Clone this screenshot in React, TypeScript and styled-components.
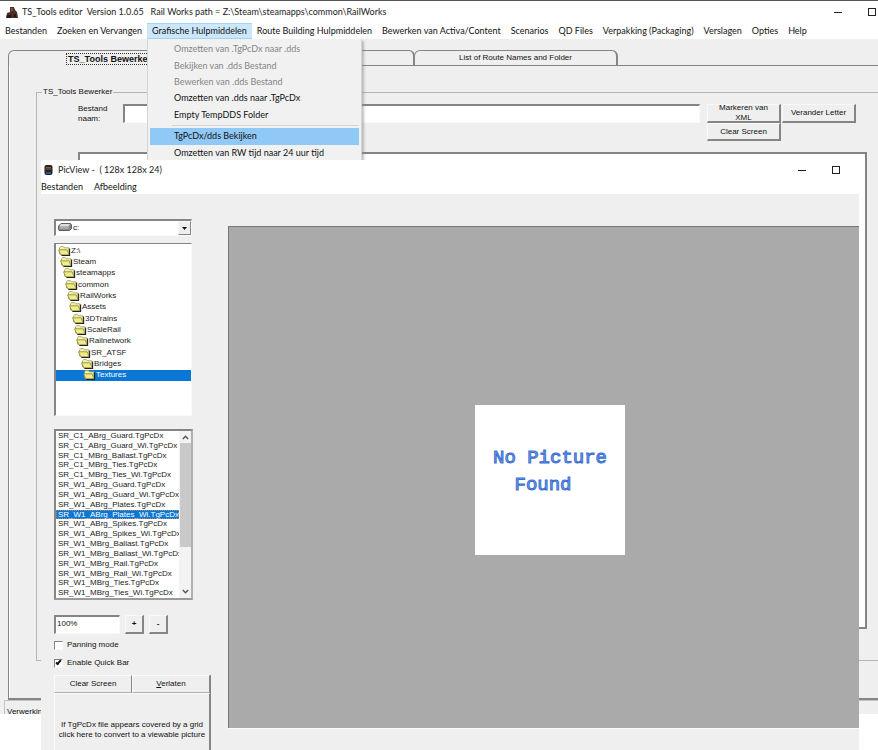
import React from "react";
import styled, { createGlobalStyle, css } from "styled-components";

const FACE = "#efefef";
const SHADOW = "#858585";
const SEGOE = `Lato, "Open Sans", sans-serif`;
const MS_SANS = `"Liberation Sans", Arial, sans-serif`;

const GlobalStyle = createGlobalStyle`
  *, *::before, *::after { box-sizing: border-box; }
  html, body, #root { height: 100%; }
  body { margin: 0; background: #fff; color: #111; overflow: hidden; font: 8px/10px ${MS_SANS}; }
  button, input, select { font: inherit; color: inherit; margin: 0; border-radius: 0; }
`;

const raised = css`
  background: ${FACE};
  border: solid;
  border-width: 1px 2px 2px 1px;
  border-color: #f8f8f8 ${SHADOW} ${SHADOW} #f8f8f8;
`;
const sunken = css`
  background: #fff;
  border: solid;
  border-width: 2px 1px 1px 2px;
  border-color: ${SHADOW} #fafafa #fafafa ${SHADOW};
`;

/* Windows */
const Desktop = styled.div`
  position: relative;
  height: 100%;
  overflow: hidden;
`;
const MainWindow = styled.main`
  display: flex;
  flex-direction: column;
  height: calc(100% - 36px);
  background: ${FACE};
  border-top: 1px solid #555;
  overflow: hidden;
`;
const PicWindow = styled.section`
  position: absolute;
  inset: 160px 19px 0 41px;
  z-index: 3;
  display: flex;
  flex-direction: column;
  background: ${FACE};
`;
const TitleBar = styled.header<{ $inner?: boolean }>`
  display: flex;
  align-items: center;
  flex: none;
  gap: 4px;
  height: ${(p) => (p.$inner ? 19 : 22)}px;
  padding: ${(p) => (p.$inner ? "0 17px 0 2px" : "0 0 0 6px")};
  background: #fff;
  font: 9px/12px ${SEGOE};
  white-space: pre;
`;
const WindowTitle = styled.h1`
  flex: 1;
  margin: 0;
  font: inherit;
  color: #222;
`;
const WindowControls = styled.div`
  display: flex;
  gap: 22px;
`;
const WindowButton = styled.button`
  display: grid;
  place-items: center;
  width: 12px;
  height: 12px;
  padding: 0;
  border: 0;
  background: none;
`;
const MenuSlot = styled.div`
  position: relative;
  display: flex;
`;
const MenuButton = styled.button<{ $open?: boolean }>`
  padding: 0 5px;
  border: 1px solid ${(p) => (p.$open ? "#a5d3f5" : "transparent")};
  border-width: 1px 0;
  background: ${(p) => (p.$open ? "#cce6fa" : "none")};
  white-space: nowrap;
`;
const MenuBar = styled.nav`
  display: flex;
  flex: none;
  height: 16px;
  background: #fff;
  font: 9px/12px ${SEGOE};
`;
const ViewerMenuBar = styled(MenuBar)`
  height: 15px;
  gap: 11px;
  ${MenuButton} { padding: 0; }
`;
const DropDown = styled.div`
  position: absolute;
  top: 100%;
  left: 0;
  z-index: 2;
  width: 215px;
  padding: 1px 2px;
  background: #f1f1f1;
  border: 1px solid #d5d5d5;
  border-top-color: #f1f1f1;
  box-shadow: 2px 2px 2px #8888;
`;
const MenuGroup = styled.div<{ $height: number }>`
  display: grid;
  grid-auto-rows: 1fr;
  height: ${(p) => p.$height}px;
`;
const MenuItem = styled.button<{ $hot?: boolean }>`
  padding: 0 0 0 24px;
  border: 0;
  background: ${(p) => (p.$hot ? "#90c8f6" : "none")};
  text-align: left;
  white-space: nowrap;
  &:disabled { color: #858585; }
`;
const MenuRule = styled.hr`
  margin: 2px 0 2px 22px;
  border: 0;
  border-top: 1px solid #d5d5d5;
`;

/* Editor */
const EditorBody = styled.div`
  display: flex;
  flex: 1;
  flex-direction: column;
  min-height: 0;
  padding: 11px 0 0 8px;
`;
const TabStrip = styled.div`
  display: flex;
  flex: none;
  height: 16px;
`;
const Tab = styled.button<{ $active?: boolean }>`
  width: 204px;
  margin-right: -1px;
  padding: 0;
  border: solid ${SHADOW};
  border-width: 1px 2px ${(p) => (p.$active ? 0 : 1)}px 1px;
  border-radius: 6px 6px 0 0;
  background: ${FACE};
  font-weight: ${(p) => (p.$active ? "bold" : "normal")};
  font-size: ${(p) => (p.$active ? 9 : 8)}px;
`;
const TabFocus = styled.span`
  padding: 0 1px;
  border: 1px dotted #333;
`;
const TabStripRest = styled.div`
  flex: 1;
  border-bottom: 1px solid ${SHADOW};
`;
const TabPanel = styled.div`
  display: flex;
  flex: 1;
  min-height: 0;
  padding: 21px 0 37px 27px;
  border: solid ${SHADOW};
  border-width: 0 0 2px 1px;
  box-shadow: inset 1px 0 #fff;
`;
const Group = styled.fieldset`
  display: flex;
  flex: 1;
  flex-direction: column;
  min-width: 0;
  margin: 0;
  padding: 7px 11px 31px 41px;
  border: 1px solid #b4b4b4;
  border-right: 0;
`;
const Legend = styled.legend`
  margin-left: -36px;
  padding: 0 1px;
`;
const FormRow = styled.div`
  display: flex;
  align-items: flex-start;
  margin-right: 11px;
`;
const FieldLabel = styled.label`
  width: 45px;
  padding-right: 10px;
`;
const FileInput = styled.input`
  ${sunken}
  flex: 1;
  min-width: 0;
  height: 19px;
`;
const ButtonGrid = styled.div`
  display: grid;
  grid-template: 19px 18px / 74px 74px;
  column-gap: 1px;
  margin-left: 7px;
`;
const PushButton = styled.button`
  ${raised}
  display: grid;
  place-content: center;
  padding: 0;
  overflow: hidden;
`;
const EditorText = styled.div`
  flex: 1;
  margin-top: 11px;
  border: 2px solid ${SHADOW};
  background: #fff;
`;
const StatusBar = styled.footer`
  flex: none;
  height: 14px;
  margin-left: -4px;
  padding: 6px 2px 0;
  border: 1px solid #c4c4c4;
  border-width: 1px 0 0 1px;
  overflow: hidden;
`;

/* Picture viewer */
const ViewerBody = styled.div`
  display: flex;
  flex: 1;
  min-height: 0;
`;
const SidePanel = styled.aside`
  display: flex;
  flex-direction: column;
  flex: none;
  width: 187px;
  padding: 25px 17px 0 13px;
`;
const DriveBox = styled.div`
  ${sunken}
  position: relative;
  width: 138px;
  height: 17px;
`;
const DriveSelect = styled.select`
  appearance: none;
  display: block;
  width: 100%;
  height: 100%;
  padding: 0 0 0 17px;
  border: 0;
  background: none;
`;
const DriveIcon = styled.svg`
  position: absolute;
  left: 2px;
  top: 2px;
`;
const DriveArrow = styled.span`
  ${raised}
  position: absolute;
  right: 0;
  top: 0;
  bottom: 0;
  display: grid;
  place-items: center;
  width: 13px;
  border-width: 1px;
  pointer-events: none;
`;
const FolderTree = styled.div`
  ${sunken}
  border-width: 1px 1px 1px 2px;
  width: 138px;
  height: 173px;
  margin-top: 7px;
  padding-top: 1px;
`;
const FolderList = styled.ul`
  display: grid;
  grid-auto-rows: 1fr;
  height: 136px;
  margin: 0;
  padding: 0;
  list-style: none;
`;
const Folder = styled.li<{ $depth: number; $selected?: boolean }>`
  display: flex;
  align-items: center;
  gap: 0;
  padding-left: ${(p) => 2 + Math.round(p.$depth * 2.25)}px;
  background: ${(p) => (p.$selected ? "#0a76d6" : "none")};
  color: ${(p) => (p.$selected ? "#fff" : "#222")};
`;
const FileBox = styled.div`
  display: flex;
  width: 139px;
  height: 171px;
  margin-top: 13px;
  background: #fff;
  border: 2px solid ${SHADOW};
  border-bottom-color: #9a9a9a;
  border-right-color: #b0b0b0;
`;
const FileList = styled.ul`
  display: grid;
  flex: 1;
  grid-auto-rows: 1fr;
  min-width: 0;
  margin: 0;
  padding: 0;
  list-style: none;
`;
const FileItem = styled.li<{ $selected?: boolean }>`
  padding-left: 2px;
  overflow: hidden;
  white-space: nowrap;
  background: ${(p) => (p.$selected ? "#0a76d6" : "none")};
  color: ${(p) => (p.$selected ? "#fff" : "#222")};
  outline: ${(p) => (p.$selected ? "1px dotted #b08a60" : "0")};
  outline-offset: -1px;
`;
const ScrollBar = styled.div`
  display: flex;
  flex-direction: column;
  align-items: center;
  width: 12px;
  padding: 4px 0;
  background: #f3f3f3;
`;
const ScrollThumb = styled.div`
  width: 11px;
  height: 104px;
  margin: 3px 0 auto;
  background: #c9c9c9;
`;
const ZoomRow = styled.div`
  display: flex;
  gap: 5px;
  margin-top: 15px;
`;
const ZoomInput = styled.input`
  ${sunken}
  width: 66px;
  height: 19px;
  padding: 0 0 3px 1px;
`;
const ZoomButton = styled(PushButton)`
  width: 19px;
  height: 19px;
  font-weight: bold;
`;
const CheckLabel = styled.label<{ $gap: number }>`
  display: flex;
  align-items: center;
  gap: 4px;
  height: 10px;
  margin-top: ${(p) => p.$gap}px;
`;
const CheckBox = styled.input`
  ${sunken}
  appearance: none;
  flex: none;
  width: 9px;
  height: 9px;
  border-width: 1px;
  &:checked::after {
    content: "";
    display: block;
    width: 3px;
    height: 6px;
    margin: -1px 0 0 2px;
    border: solid #111;
    border-width: 0 2px 2px 0;
    rotate: 40deg;
  }
`;
const QuickBar = styled.div`
  display: grid;
  flex: 1;
  grid-template: 18px 1fr / 1fr 1fr;
  margin-top: 7px;
  border: solid ${SHADOW};
  border-width: 0 1px 0 0;
  box-shadow: inset 1px 1px #fafafa;
`;
const QuickButton = styled.button<{ $wide?: boolean }>`
  grid-column: ${(p) => (p.$wide ? "1 / -1" : "auto")};
  padding: ${(p) => (p.$wide ? "16px 0 0" : "0")};
  background: ${FACE};
  border: solid;
  border-width: 1px 1px ${(p) => (p.$wide ? 0 : 1)}px 1px;
  border-color: #fafafa ${SHADOW} #b0b0b0 #fafafa;
  white-space: nowrap;
`;
const PictureArea = styled.div`
  display: grid;
  flex: 1;
  place-items: center;
  min-width: 0;
  margin: 32px 0 22px;
  padding-left: 12px;
  border: solid #777;
  border-width: 1px 0 0 1px;
  background: #aaa;
  box-shadow: 0 1px #fafafa;
`;
const Picture = styled.figure`
  display: grid;
  align-content: center;
  width: 150px;
  height: 150px;
  margin: 4px 0 0;
  padding-bottom: 16px;
  background: #fff;
  color: #7fa6ea;
  -webkit-text-stroke: 1px #3a6fd0;
  font: 19px/27px "Liberation Mono", "Courier New", monospace;
  text-align: center;
`;
const PictureLine = styled.span<{ $shift?: boolean }>`
  padding-right: ${(p) => (p.$shift ? 14 : 0)}px;
`;

const topMenus = [
  "Bestanden", "Zoeken en Vervangen", "Grafische Hulpmiddelen", "Route Building Hulpmiddelen",
  "Bewerken van Activa/Content", "Scenarios", "QD Files", "Verpakking (Packaging)",
  "Verslagen", "Opties", "Help",
];
const folders = [
  "Z:\\", "Steam", "steamapps", "common", "RailWorks", "Assets", "3DTrains", "ScaleRail",
  "Railnetwork", "SR_ATSF", "Bridges", "Textures",
];
const files = [
  "SR_C1_ABrg_Guard", "SR_C1_ABrg_Guard_Wi", "SR_C1_MBrg_Ballast", "SR_C1_MBrg_Ties",
  "SR_C1_MBrg_Ties_Wi", "SR_W1_ABrg_Guard", "SR_W1_ABrg_Guard_Wi", "SR_W1_ABrg_Plates",
  "SR_W1_ABrg_Plates_Wi", "SR_W1_ABrg_Spikes", "SR_W1_ABrg_Spikes_Wi", "SR_W1_MBrg_Ballast",
  "SR_W1_MBrg_Ballast_Wi", "SR_W1_MBrg_Rail", "SR_W1_MBrg_Rail_Wi", "SR_W1_MBrg_Ties",
  "SR_W1_MBrg_Ties_Wi",
];

function Controls() {
  return (
    <WindowControls>
      <WindowButton aria-label="Minimize">
        <svg width="8" height="8"><path d="M0 4.5h8" stroke="#222" /></svg>
      </WindowButton>
      <WindowButton aria-label="Maximize">
        <svg width="8" height="8"><rect x=".5" y=".5" width="7" height="7" fill="none" stroke="#222" /></svg>
      </WindowButton>
    </WindowControls>
  );
}

function FolderIcon() {
  return (
    <svg width="13" height="10" viewBox="0 0 13 10">
      <path d="M1.5 8V1.8L2.8.6h2.6l1 1.2h4.4V8z" fill="#f6f3a6" stroke="#9a9a5c" strokeWidth=".8" />
      <path d="M.5 3.8h8.6l2 5H2.8z" fill="#f0ec86" stroke="#85853f" strokeWidth=".8" />
      <path d="M11.6 2.4v7.1H3.4" fill="none" stroke="#222" strokeWidth="1.1" />
    </svg>
  );
}

function Chevron({ down }: { down?: boolean }) {
  return (
    <svg width="7" height="5" viewBox="0 0 7 5">
      <path d={down ? "M.8 1l2.7 2.7L6.2 1" : "M.8 4l2.7-2.7L6.2 4"} fill="none" stroke="#555" strokeWidth="1.4" />
    </svg>
  );
}

function GraphicsMenu() {
  return (
    <DropDown role="menu">
      <MenuGroup $height={82}>
        <MenuItem role="menuitem" disabled>Omzetten van .TgPcDx naar .dds</MenuItem>
        <MenuItem role="menuitem" disabled>Bekijken van .dds Bestand</MenuItem>
        <MenuItem role="menuitem" disabled>Bewerken van .dds Bestand</MenuItem>
        <MenuItem role="menuitem">Omzetten van .dds naar .TgPcDx</MenuItem>
        <MenuItem role="menuitem">Empty TempDDS Folder</MenuItem>
      </MenuGroup>
      <MenuRule />
      <MenuGroup $height={33}>
        <MenuItem role="menuitem" $hot>TgPcDx/dds Bekijken</MenuItem>
        <MenuItem role="menuitem">Omzetten van RW tijd naar 24 uur tijd</MenuItem>
      </MenuGroup>
    </DropDown>
  );
}

function PicView() {
  return (
    <PicWindow aria-label="PicView">
      <TitleBar $inner>
        <svg width="11" height="12" viewBox="0 0 11 12">
          <rect x="1.5" y="1" width="8" height="10" rx="2" fill="#20242c" />
          <path d="M3 3.5h5M2.5 5h6" stroke="#9a5a30" />
          <path d="M3 9h5" stroke="#2c5288" strokeWidth="2" />
        </svg>
        <WindowTitle>{"PicView -  ( 128x 128x 24)"}</WindowTitle>
        <Controls />
      </TitleBar>
      <ViewerMenuBar>
        <MenuButton>Bestanden</MenuButton>
        <MenuButton>Afbeelding</MenuButton>
      </ViewerMenuBar>
      <ViewerBody>
        <SidePanel>
          <DriveBox>
            <DriveIcon width="14" height="8" viewBox="0 0 14 8">
              <path d="M3 .5h9.5L13.5 2v3.5l-2 2H1.2L.5 6.5V3z" fill="#888" stroke="#444" strokeWidth=".8" />
              <path d="M3 1h9L10.5 3.5H1.2z" fill="#ddd" />
              <path d="M1.5 5h9" stroke="#ccc" />
            </DriveIcon>
            <DriveSelect aria-label="Drive"><option>c:</option></DriveSelect>
            <DriveArrow>
              <svg width="5" height="3"><path d="M0 0h5L2.5 3z" fill="#111" /></svg>
            </DriveArrow>
          </DriveBox>
          <FolderTree>
            <FolderList role="listbox" aria-label="Folders">
              {folders.map((name, i) => (
                <Folder key={name} role="option" aria-selected={i === 11} $depth={i} $selected={i === 11}>
                  <FolderIcon />{name}
                </Folder>
              ))}
            </FolderList>
          </FolderTree>
          <FileBox>
            <FileList role="listbox" aria-label="Files">
              {files.map((name, i) => (
                <FileItem key={name} role="option" aria-selected={i === 8} $selected={i === 8}>{name}.TgPcDx</FileItem>
              ))}
            </FileList>
            <ScrollBar>
              <Chevron />
              <ScrollThumb />
              <Chevron down />
            </ScrollBar>
          </FileBox>
          <ZoomRow>
            <ZoomInput aria-label="Zoom" defaultValue="100%" />
            <ZoomButton>+</ZoomButton>
            <ZoomButton>-</ZoomButton>
          </ZoomRow>
          <CheckLabel $gap={6}><CheckBox type="checkbox" />Panning mode</CheckLabel>
          <CheckLabel $gap={8}><CheckBox type="checkbox" defaultChecked />Enable Quick Bar</CheckLabel>
          <QuickBar>
            <QuickButton>Clear Screen</QuickButton>
            <QuickButton><u>V</u>erlaten</QuickButton>
            <QuickButton $wide>
              If TgPcDx file appears covered by a grid<br />click here to convert to a viewable picture
            </QuickButton>
          </QuickBar>
        </SidePanel>
        <PictureArea>
          <Picture>
            <PictureLine>No Picture</PictureLine>
            <PictureLine $shift>Found</PictureLine>
          </Picture>
        </PictureArea>
      </ViewerBody>
    </PicWindow>
  );
}

export default function App() {
  return (
    <Desktop>
      <GlobalStyle />
      <MainWindow>
        <TitleBar>
          <svg width="12" height="13" viewBox="0 0 12 13">
            <path d="M4 1l4 0 1 3 2 2 1 6H0l1-5 3-1z" fill="#4a2c28" />
            <path d="M5 2h2v3H5z" fill="#8a4a3c" />
            <path d="M1 9h4v3H1zM8 8h2v3H8z" fill="#1e1a1c" />
          </svg>
          <WindowTitle>{"TS_Tools editor  Version 1.0.65   Rail Works path = Z:\\Steam\\steamapps\\common\\RailWorks"}</WindowTitle>
          <Controls />
        </TitleBar>
        <MenuBar>
          {topMenus.map((name, i) => (
            <MenuSlot key={name}>
              <MenuButton $open={i === 2}>{name}</MenuButton>
              {i === 2 && <GraphicsMenu />}
            </MenuSlot>
          ))}
        </MenuBar>
        <EditorBody>
          <TabStrip role="tablist">
            <Tab role="tab" aria-selected $active><TabFocus>TS_Tools Bewerker</TabFocus></Tab>
            <Tab role="tab" aria-label="Tab 2" />
            <Tab role="tab">List of Route Names and Folder</Tab>
            <TabStripRest />
          </TabStrip>
          <TabPanel role="tabpanel">
            <Group>
              <Legend>TS_Tools Bewerker</Legend>
              <FormRow>
                <FieldLabel htmlFor="file-name">Bestand naam:</FieldLabel>
                <FileInput id="file-name" />
                <ButtonGrid>
                  <PushButton><span>Markeren van<br />XML</span></PushButton>
                  <PushButton>Verander Letter</PushButton>
                  <PushButton>Clear Screen</PushButton>
                </ButtonGrid>
              </FormRow>
              <EditorText />
            </Group>
          </TabPanel>
          <StatusBar>Verwerking</StatusBar>
        </EditorBody>
      </MainWindow>
      <PicView />
    </Desktop>
  );
}
